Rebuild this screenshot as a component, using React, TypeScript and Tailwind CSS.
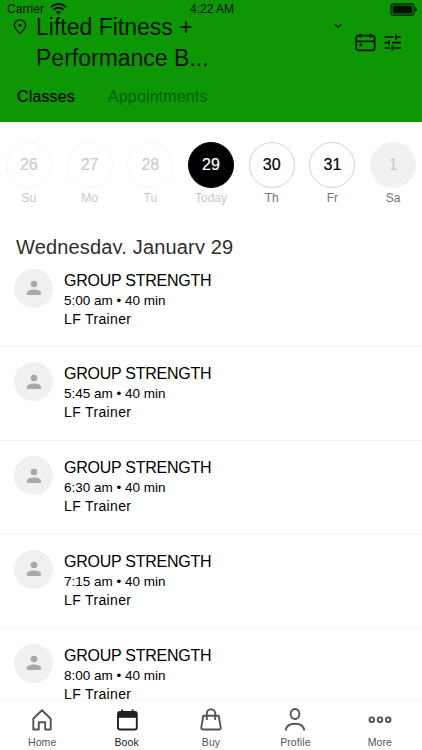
import type { ReactNode } from 'react';
import clsx from 'clsx';

type Day = {
  date: number;
  label: string;
  state: 'past' | 'selected' | 'open' | 'empty';
};

const days: Day[] = [
  { date: 26, label: 'Su', state: 'past' },
  { date: 27, label: 'Mo', state: 'past' },
  { date: 28, label: 'Tu', state: 'past' },
  { date: 29, label: 'Today', state: 'selected' },
  { date: 30, label: 'Th', state: 'open' },
  { date: 31, label: 'Fr', state: 'open' },
  { date: 1, label: 'Sa', state: 'empty' },
];

const classTimes = ['5:00 am', '5:45 am', '6:30 am', '7:15 am', '8:00 am'];

function StatusBar() {
  return (
    <div className="grid h-[18px] grid-cols-3 items-center pl-[7px] pr-[4px] text-[12px] leading-[18px]">
      <div className="flex items-center gap-[6px]">
        <span className="tracking-[0.05px]">Carrier</span>
        <svg width="17" height="12" viewBox="0 0 17 12" fill="none" stroke="currentColor" strokeWidth="1.9" aria-hidden>
          <path d="M1 4.1a10.6 10.6 0 0 1 15 0" />
          <path d="M3.6 6.8a6.9 6.9 0 0 1 9.8 0" />
          <path d="M8.5 11.7 5.9 9.1a3.7 3.7 0 0 1 5.2 0Z" fill="currentColor" stroke="none" />
        </svg>
      </div>
      <span className="-ml-[3px] -mr-[2px] text-center">4:22 AM</span>
      <svg className="justify-self-end" width="28" height="13" viewBox="0 0 28 13" fill="none" aria-hidden>
        <rect x="0.9" y="0.9" width="23.2" height="11.2" rx="2.6" stroke="currentColor" strokeWidth="1.1" />
        <rect x="2.6" y="2.6" width="19.8" height="7.8" rx="1" fill="currentColor" />
        <path d="M25.4 4.2c1.1.4 1.7 1.3 1.7 2.3s-.6 1.9-1.7 2.3Z" fill="currentColor" />
      </svg>
    </div>
  );
}

function Header() {
  return (
    <header className="h-[122px] shrink-0 bg-[#0d9704] text-[#031202]">
      <StatusBar />
      <div className="flex h-[66px]">
        <svg className="ml-[13px] mt-px shrink-0" width="14" height="16" viewBox="0 0 14 16" fill="none" stroke="currentColor" strokeWidth="1.3" aria-hidden>
          <path d="M7 14.6C4.2 12 1.3 9.2 1.3 6.3a5.7 5.5 0 0 1 11.4 0c0 2.9-2.9 5.7-5.7 8.3Z" strokeLinejoin="round" />
          <circle cx="7" cy="6.3" r="1.5" fill="currentColor" stroke="none" />
        </svg>
        <h1 className="-mt-[6px] ml-[9px] w-[290px] text-[23px] leading-[30.5px]">
          Lifted Fitness +<br />
          Performance B...
        </h1>
        <svg className="ml-[7px] mt-[5px]" width="10" height="6" viewBox="0 0 10 6" fill="none" stroke="currentColor" strokeWidth="1.2" aria-hidden>
          <path d="M1.6 1.3 5 4.3 8.4 1.3" />
        </svg>
        <svg className="ml-[12px] mt-[14px]" width="21" height="21" viewBox="0 0 21 21" fill="none" stroke="currentColor" strokeWidth="1.7" aria-hidden>
          <rect x="1.2" y="3.6" width="18.4" height="14.8" rx="2.5" />
          <path d="M1.2 9.3h18.4M5.5 1.5v4.3M15.3 1.5v4.3" />
          <circle cx="5.8" cy="13" r="1.4" fill="currentColor" stroke="none" />
        </svg>
        <svg className="ml-[8px] mt-[16px]" width="18" height="18" viewBox="0 0 18 18" fill="none" stroke="currentColor" strokeWidth="1.7" aria-hidden>
          <path d="M.8 3h8.7M12 .3v5.4M12 3h5M.8 8.600h5M5.200 5.900v5.400M8 8.600h9M.8 14h4.700M8.300 11.300v5.400M8.300 14H17" />
        </svg>
      </div>
      <nav className="flex gap-[33px] pl-[17px] text-[16px] leading-[25px] tracking-[0.15px]">
        <span className="text-black [-webkit-text-stroke:0.15px]">Classes</span>
        <span className="text-[#07600a]">Appointments</span>
      </nav>
    </header>
  );
}

function DayStrip() {
  return (
    <div className="-mx-[1.5px] grid shrink-0 grid-cols-7 pt-[19.5px]">
      {days.map((day) => (
        <div key={day.date} className="flex flex-col items-center">
          <div
            className={clsx(
              'flex h-[46px] w-[46px] items-center justify-center rounded-full border text-[16px] [-webkit-text-stroke:0.2px]',
              day.state === 'past' && 'border-[#f5f5f5] text-[#cccccc]',
              day.state === 'selected' && 'border-black bg-black text-white',
              day.state === 'open' && 'border-[#d2d2d2] text-black',
              day.state === 'empty' && 'border-[#f1f1f1] bg-[#f1f1f1] text-[#cccccc]',
            )}
          >
            {day.date}
          </div>
          <span
            className={clsx(
              'mt-px text-[12px] leading-[18px]',
              day.state === 'past' || day.state === 'selected' ? 'text-[#c8c8c8]' : 'text-[#757575]',
            )}
          >
            {day.label}
          </span>
        </div>
      ))}
    </div>
  );
}

function ClassRow({ time }: { time: string }) {
  return (
    <li className="flex h-[93.75px] shrink-0 border-b border-[#f4f4f4] pl-[14px] pt-[15px]">
      <div className="flex h-[39px] w-[39px] shrink-0 items-center justify-center rounded-full bg-[#f0f0f0]">
        <svg width="16" height="16" viewBox="0 0 16 16" fill="#a8a8a8" aria-hidden>
          <circle cx="8" cy="4" r="3.3" />
          <path d="M.8 13.800v-.6C.8 10.600 4.500 9.400 8 9.400s7.200 1.200 7.200 3.800v.6c0 .7-.5 1.200-1.200 1.200H2c-.7 0-1.200-.5-1.200-1.200Z" />
        </svg>
      </div>
      <div className="ml-[11px] text-black">
        <p className="mt-[2px] text-[16px] leading-5 tracking-[-0.25px]">GROUP STRENGTH</p>
        <p className="mt-px text-[13.5px] leading-[18px]">{time} • 40 min</p>
        <p className="text-[14px] leading-[19px] tracking-[0.35px]">LF Trainer</p>
      </div>
    </li>
  );
}

function TabItem({ label, active, children }: { label: string; active?: boolean; children: ReactNode }) {
  return (
    <div className={clsx('flex flex-col items-center pt-[6px]', active ? 'text-[#202126]' : 'text-[#53545b]')}>
      <svg width="26" height="26" viewBox="0 0 26 26" fill="none" stroke="currentColor" strokeWidth="1.9" aria-hidden>
        {children}
      </svg>
      <span className="mt-[2px] text-[10.5px] leading-[14px] tracking-[0.1px]">{label}</span>
    </div>
  );
}

function TabBar() {
  return (
    <nav className="grid h-[50px] shrink-0 grid-cols-5 border-t border-[#f5f5f5] bg-white">
      <TabItem label="Home">
        <path d="M4.300 11.700 13 3.200l8.700 8.500v10.800h-5.500v-7.200H9.800v7.200H4.300Z" strokeLinejoin="round" />
      </TabItem>
      <TabItem label="Book" active>
        <rect x="4" y="5" width="18.8" height="17.5" rx="2" />
        <path d="M4 5h18.800v5.800H4Z" fill="currentColor" stroke="none" />
        <path d="M8.200 2.500v3M18.600 2.500v3" />
      </TabItem>
      <TabItem label="Buy">
        <path d="M5.300 8.700h15.400l2 11.600c.2 1.400-.5 2.200-1.800 2.200H5.100c-1.300 0-2-.8-1.800-2.200Z" strokeLinejoin="round" />
        <path d="M8.800 13V6.500a4.200 4.200 0 0 1 8.400 0V13" />
      </TabItem>
      <TabItem label="Profile">
        <ellipse cx="13" cy="7" rx="4.4" ry="5" />
        <path d="M3.600 23.500c.7-4.200 4.500-6.700 9.400-6.700s8.700 2.500 9.400 6.700" />
      </TabItem>
      <TabItem label="More">
        <circle cx="4.8" cy="12.7" r="2.3" />
        <circle cx="13" cy="12.7" r="2.3" />
        <circle cx="21.2" cy="12.7" r="2.3" />
      </TabItem>
    </nav>
  );
}

export default function App() {
  return (
    <div className="flex h-[750px] w-[422px] flex-col overflow-hidden bg-white font-['Liberation_Sans',sans-serif]">
      <Header />
      <main className="flex min-h-0 flex-1 flex-col overflow-hidden">
        <DayStrip />
        <h2 className="mt-[30px] h-[17px] shrink-0 overflow-hidden pl-[16px] text-[20px] leading-[21px] tracking-[0.17px] text-[#2e2e2e]">
          Wednesday, January 29
        </h2>
        <ul className="flex flex-col">
          {classTimes.map((time) => (
            <ClassRow key={time} time={time} />
          ))}
        </ul>
      </main>
      <TabBar />
    </div>
  );
}
